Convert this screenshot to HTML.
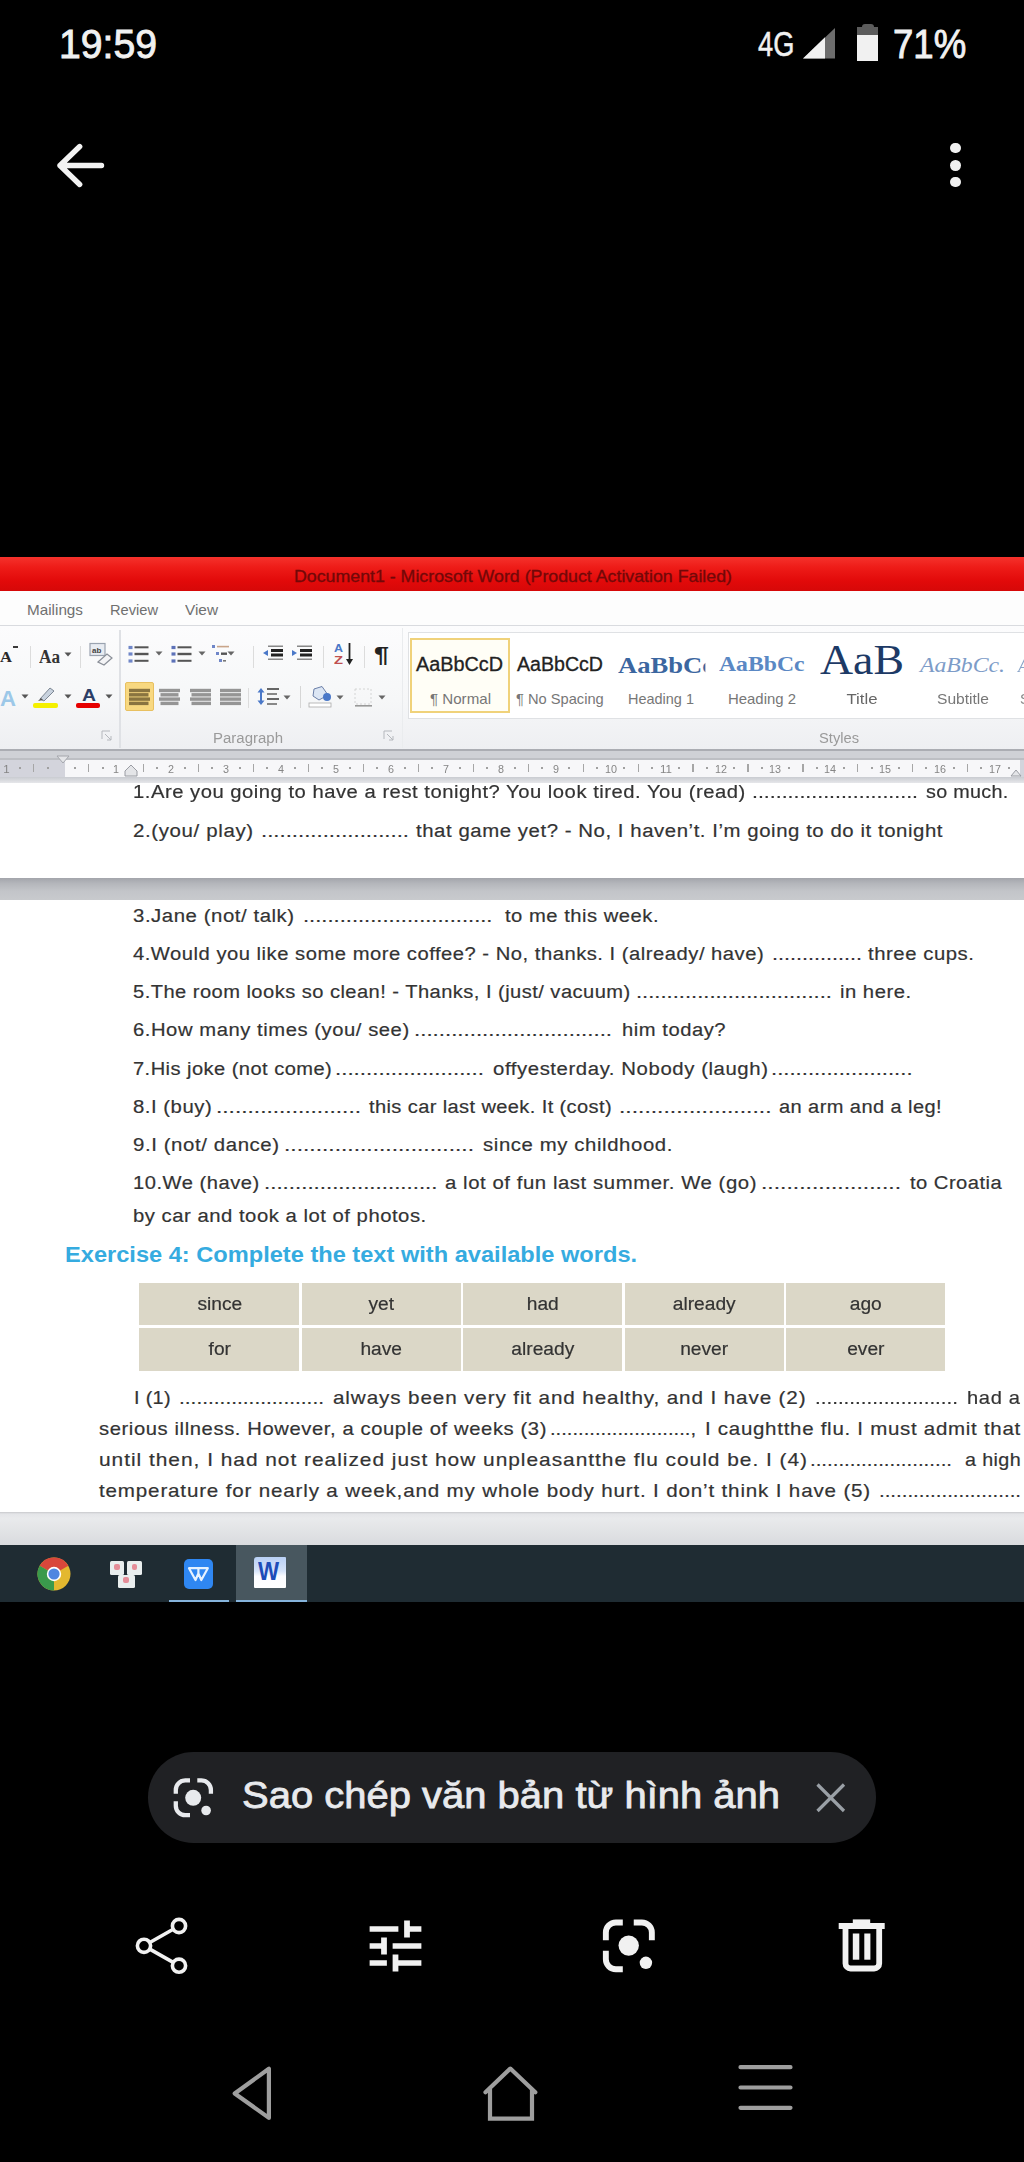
<!DOCTYPE html><html><head><meta charset="utf-8"><title>screen</title><style>*{margin:0;padding:0;box-sizing:border-box}
html,body{width:1024px;height:2162px;background:#000;overflow:hidden;font-family:"Liberation Sans",sans-serif}
.a{position:absolute;white-space:nowrap;line-height:1}
svg.a{overflow:visible}</style></head><body>
<div class="a" style="left:58.6px;transform-origin:left;top:23.9px;font-size:41px;color:#f1f1f1;font-weight:normal;font-family:'Liberation Sans', sans-serif;font-style:normal;transform:scaleX(0.9551);-webkit-text-stroke:0.9px #f1f1f1;"><span id="t0">19:59</span></div>
<div class="a" style="left:757.7px;transform-origin:left;top:26.5px;font-size:34.5px;color:#f1f1f1;font-weight:normal;font-family:'Liberation Sans', sans-serif;font-style:normal;transform:scaleX(0.7886);-webkit-text-stroke:0.5px #f1f1f1;"><span id="t1">4G</span></div>
<div class="a" style="left:892.5px;transform-origin:left;top:23.9px;font-size:41px;color:#f1f1f1;font-weight:normal;font-family:'Liberation Sans', sans-serif;font-style:normal;transform:scaleX(0.8920);-webkit-text-stroke:0.9px #f1f1f1;"><span id="t2">71%</span></div>
<svg class="a" style="left:800px;top:25px" width="40" height="40" viewBox="800 25 40 40"><polygon points="803,58.6 835,58.6 835,28" fill="#6d6d6d"/><polygon points="803,58.6 825,58.6 825,37.2" fill="#f1f1f1"/></svg>
<div class="a" style="left:861.5px;top:23.5px;width:12.5px;height:5px;background:#5c5c5c;border-radius:3px 3px 0 0"></div>
<div class="a" style="left:857px;top:27px;width:21px;height:8px;background:#5c5c5c"></div>
<div class="a" style="left:857px;top:35px;width:21px;height:26px;background:#f1f1f1"></div>
<svg class="a" style="left:45px;top:130px" width="70" height="70" viewBox="45 130 70 70" fill="none" stroke="#f3f3f3" stroke-width="5.4" stroke-linecap="round" stroke-linejoin="round"><path d="M79.7 146.5 L60 165.5 L79.7 184.5 M60 165.5 H101.5"/></svg>
<div class="a" style="left:950.1px;top:142.6px;width:10.8px;height:10.8px;border-radius:50%;background:#f1f1f1"></div>
<div class="a" style="left:950.1px;top:160.1px;width:10.8px;height:10.8px;border-radius:50%;background:#f1f1f1"></div>
<div class="a" style="left:950.1px;top:176.6px;width:10.8px;height:10.8px;border-radius:50%;background:#f1f1f1"></div>
<div class="a" style="left:148px;top:1752px;width:727.5px;height:91px;border-radius:45.5px;background:#202124"></div>
<svg class="a" style="left:165px;top:1770px" width="56" height="56" viewBox="165 1770 56 56" fill="none" stroke="#e8eaed" stroke-width="4.3"><path d="M175.8 1793.7 V1789.9 A9.5 9.5 0 0 1 185.3 1780.4 H190"/><path d="M197.3 1780.4 H201.4 A9.5 9.5 0 0 1 210.9 1789.9 V1793.7"/><path d="M175.8 1801.2 V1805.7 A9.5 9.5 0 0 0 185.3 1815.2 H190"/><circle cx="193.2" cy="1797.8" r="8" fill="#e8eaed" stroke="none"/><circle cx="206.1" cy="1810.5" r="4.8" fill="#e8eaed" stroke="none"/></svg>
<div class="a" style="left:242.0px;transform-origin:left;top:1777.3px;font-size:37px;color:#e8eaed;font-weight:normal;font-family:'Liberation Sans', sans-serif;font-style:normal;transform:scaleX(1.0805);-webkit-text-stroke:0.8px #e8eaed;"><span id="t3">Sao chép văn bản từ hình ảnh</span></div>
<svg class="a" style="left:812px;top:1779px" width="38" height="38" viewBox="812 1779 38 38" stroke="#9aa0a6" stroke-width="3.2"><path d="M817.5 1784.5 L844 1811 M844 1784.5 L817.5 1811"/></svg>
<svg class="a" style="left:125px;top:1905px" width="80" height="80" viewBox="125 1905 80 80" fill="none" stroke="#f1f1f1" stroke-width="3.6"><circle cx="144" cy="1945.8" r="6.6"/><circle cx="179" cy="1926" r="6.6"/><circle cx="179" cy="1965.7" r="6.6"/><path d="M149.8 1942.5 L173.2 1929.3 M149.8 1949.1 L173.2 1962.4"/></svg>
<svg class="a" style="left:361px;top:1912px" width="69" height="68" viewBox="0 0 24 24" preserveAspectRatio="none"><path fill="#f1f1f1" d="M3 17v2h6v-2H3zM3 5v2h10V5H3zm10 16v-2h8v-2h-8v-2h-2v6h2zM7 9v2H3v2h4v2h2V9H7zm14 4v-2H11v2h10zm-6-4h2V7h4V5h-4V3h-2v6z"/></svg>
<svg class="a" style="left:596px;top:1914px" width="66" height="64" viewBox="596 1914 66 64" fill="none" stroke="#f1f1f1" stroke-width="5.9"><path d="M605.85 1940.2 V1932.45 A10 10 0 0 1 615.85 1922.45 H622.8"/><path d="M633.75 1922.45 H641.85 A10 10 0 0 1 651.85 1932.45 V1940.2"/><path d="M605.85 1950.7 V1959.25 A10 10 0 0 0 615.85 1969.25 H622.8"/><circle cx="628.7" cy="1945.6" r="10.2" fill="#f1f1f1" stroke="none"/><circle cx="645.9" cy="1962.8" r="6.2" fill="#f1f1f1" stroke="none"/></svg>
<svg class="a" style="left:834px;top:1914px" width="56" height="62" viewBox="834 1914 56 62" fill="none" stroke="#f1f1f1" stroke-width="5.8"><rect x="852.8" y="1919.4" width="17.4" height="5" fill="#f1f1f1" stroke="none"/><rect x="838.7" y="1923" width="46" height="6" fill="#f1f1f1" stroke="none"/><path d="M845.5 1928 V1963.5 a5 5 0 0 0 5 5 H874.2 a5 5 0 0 0 5 -5 V1928"/><rect x="852.8" y="1933.5" width="6.5" height="26.2" fill="#f1f1f1" stroke="none"/><rect x="864.3" y="1933.5" width="6.1" height="26.2" fill="#f1f1f1" stroke="none"/></svg>
<svg class="a" style="left:220px;top:2055px" width="600" height="80" viewBox="220 2055 600 80" fill="none" stroke="#9e9e9e" stroke-width="4.2" stroke-linejoin="round" stroke-linecap="round"><path d="M268.9 2068.7 V2117.9 L234.7 2093.5 Z"/><path d="M485.5 2092.3 L510.3 2068.6 L535.3 2092.3"/><path d="M490 2089 V2118.6 H532 V2089" stroke-linecap="butt" stroke-linejoin="miter"/><path d="M740.5 2067.2 H790.5 M740.5 2087.5 H790.5 M740.5 2107.8 H790.5"/></svg>
<div style="position:absolute;left:0;top:0;width:1024px;height:2162px;filter:blur(0.35px)">
<div class="a" style="left:0;top:557px;width:1024px;height:34px;background:linear-gradient(#f5322c 0%,#ee1c18 30%,#e20a0a 70%,#d60808 100%)"></div>
<div class="a" style="left:294.0px;transform-origin:left;top:567.5px;font-size:16.5px;color:#720808;font-weight:normal;font-family:'Liberation Sans', sans-serif;font-style:normal;transform:scaleX(1.0765);-webkit-text-stroke:0.3px #720808;"><span id="t4">Document1  -  Microsoft Word (Product Activation Failed)</span></div>
<div class="a" style="left:0;top:591px;width:1024px;height:35px;background:#fdfdfd;border-bottom:1.5px solid #d9dbdf"></div>
<div class="a" style="left:27.0px;transform-origin:left;top:602.7px;font-size:14.5px;color:#707070;font-weight:normal;font-family:'Liberation Sans', sans-serif;font-style:normal;transform:scaleX(1.0529);"><span id="t5">Mailings</span></div>
<div class="a" style="left:110.0px;transform-origin:left;top:602.7px;font-size:14.5px;color:#707070;font-weight:normal;font-family:'Liberation Sans', sans-serif;font-style:normal;transform:scaleX(1.0095);"><span id="t6">Review</span></div>
<div class="a" style="left:185.0px;transform-origin:left;top:602.7px;font-size:14.5px;color:#707070;font-weight:normal;font-family:'Liberation Sans', sans-serif;font-style:normal;transform:scaleX(1.0586);"><span id="t7">View</span></div>
<div class="a" style="left:0;top:626px;width:1024px;height:123px;background:linear-gradient(#fcfcfd,#f6f7f8 60%,#eeeff2)"></div>
<div class="a" style="left:119px;top:630px;width:1.5px;height:118px;background:#dfe1e5"></div>
<div class="a" style="left:0;top:749px;width:1024px;height:11px;background:linear-gradient(#abadb3 0,#abadb3 2px,#cfd1d6 2px,#cfd1d6 9px,#bdbfc4 9px)"></div>
<div class="a" style="left:0;top:760px;width:1024px;height:17px;background:#d3d4dc"></div>
<div class="a" style="left:64.5px;top:760px;width:955.5px;height:17px;background:#f7f7f9"></div>
<div class="a" style="left:0;top:777px;width:1024px;height:6px;background:linear-gradient(#c9ccd1,#e6e7ea)"></div>
<div class="a" style="left:0;top:783px;width:1024px;height:95px;background:#fff"></div>
<div class="a" style="left:0;top:878px;width:1024px;height:22px;background:linear-gradient(#a3a5ab 0%,#b4b6bb 25%,#c3c5c9 60%,#c8cacd 100%)"></div>
<div class="a" style="left:0;top:900px;width:1024px;height:612px;background:#fff"></div>
<div class="a" style="left:0;top:1512px;width:1024px;height:33px;background:linear-gradient(#c8c9cc 0,#e4e5e8 2px,#e9eaec 20%,#d9dbde 100%)"></div>
<div class="a" style="left:0;top:1545px;width:1024px;height:57px;background:#1f2c33"></div>
<div class="a" style="left:236px;top:1545px;width:71px;height:57px;background:#48575f"></div>
<div class="a" style="left:169px;top:1599.5px;width:60px;height:2.5px;background:#86b4dc"></div>
<div class="a" style="left:236px;top:1599.5px;width:71px;height:2.5px;background:#86b4dc"></div>
<svg class="a" style="left:36px;top:1556px" width="36" height="36" viewBox="-18 -18 36 36"><circle r="16.5" fill="#e3b82f"/><path d="M0 0 L-14.3 -8.25 A16.5 16.5 0 0 1 14.3 -8.25 Z" fill="#d9473b"/><path d="M0 0 L-14.3 -8.25 A16.5 16.5 0 0 0 0 16.5 Z" fill="#3a9a4c"/><circle r="7.2" fill="#fff"/><circle r="5.6" fill="#4f86e0"/></svg>
<div class="a" style="left:109.5px;top:1560.8px;width:14.7px;height:14px;background:#e9eeee;border-radius:1.5px"></div>
<div class="a" style="left:127.1px;top:1560.8px;width:14.6px;height:14px;background:#e9eeee;border-radius:1.5px"></div>
<div class="a" style="left:118.3px;top:1575px;width:16.4px;height:12.6px;background:#e9eeee;border-radius:1.5px"></div>
<div class="a" style="left:114px;top:1564px;width:6px;height:6px;background:#e58d98;border-radius:2px"></div>
<div class="a" style="left:131.5px;top:1564px;width:5px;height:6px;background:#e58d98;border-radius:2px"></div>
<div class="a" style="left:123px;top:1576.5px;width:6px;height:6px;background:#e58d98;border-radius:2px"></div>
<div class="a" style="left:184.3px;top:1558.8px;width:28.8px;height:30.2px;background:#2f87f2;border-radius:5px"></div>
<svg class="a" style="left:175px;top:1550px" width="50" height="45" viewBox="175 1550 50 45" fill="none" stroke="#e6f2ff" stroke-width="2.2" stroke-linejoin="round"><path d="M189 1568.2 H207.8 L201.3 1580 L198.4 1573.5 L195.5 1580 Z M198.4 1568.2 V1573.5"/></svg>
<div class="a" style="left:254px;top:1557px;width:32.3px;height:30.5px;background:linear-gradient(#b9d0f5 0%,#d6e4fa 45%,#fbfcff 62%,#ffffff 100%);border-radius:3px 1px 1px 1px"></div>
<div class="a" style="left:257.6px;transform-origin:left;top:1558.8px;font-size:25px;color:#1d4db8;font-weight:bold;font-family:'Liberation Sans', sans-serif;font-style:normal;transform:scaleX(0.8937);"><span id="t8">W</span></div>
<div class="a" style="left:0.0px;transform-origin:left;top:650.4px;font-size:15px;color:#2a2a2a;font-weight:bold;font-family:'Liberation Serif', serif;font-style:normal;transform:scaleX(1.1066);"><span id="t9">A</span></div>
<div class="a" style="left:13px;top:645.5px;width:5px;height:2px;background:#3a3a3a"></div>
<div class="a" style="left:30px;top:646px;width:1px;height:22px;background:#dcdcdc"></div>
<div class="a" style="left:39.0px;transform-origin:left;top:647.9px;font-size:18px;color:#333;font-weight:bold;font-family:'Liberation Serif', serif;font-style:normal;transform:scaleX(0.9545);"><span id="t10">Aa</span></div>
<svg class="a" style="left:64px;top:652px" width="8" height="5" viewBox="0 0 8 5"><path d="M0.5 0.5 H7.5 L4 4.5Z" fill="#555"/></svg>
<div class="a" style="left:80px;top:646px;width:1px;height:22px;background:#dcdcdc"></div>
<svg class="a" style="left:88px;top:642px" width="26" height="25" viewBox="0 0 26 25"><rect x="2" y="1.5" width="15" height="12" fill="#e8ecf2" stroke="#9aa3b0" stroke-width="1.2"/><text x="4" y="11" font-size="8" font-family="Liberation Sans" font-weight="bold" fill="#444">ab</text><path d="M10 20 L19 12 L24 16 L16 23 Z" fill="#f4f4f6" stroke="#8a8f98" stroke-width="1.2"/></svg>
<div class="a" style="left:0.0px;transform-origin:left;top:688.4px;font-size:22px;color:#9cc8e8;font-weight:bold;font-family:'Liberation Sans', sans-serif;font-style:normal;transform:scaleX(1.0069);"><span id="t11">A</span></div>
<svg class="a" style="left:21px;top:694px" width="8" height="5" viewBox="0 0 8 5"><path d="M0.5 0.5 H7.5 L4 4.5Z" fill="#555"/></svg>
<svg class="a" style="left:36px;top:685px" width="20" height="17" viewBox="0 0 20 17"><path d="M4 14 L14 3 L18 6 L8 16 Z" fill="#c8d2de" stroke="#7d8794" stroke-width="1"/><path d="M2 16 L5 13 L7 15Z" fill="#555"/></svg>
<div class="a" style="left:33px;top:703px;width:25px;height:5px;background:#f5f000;border-radius:2px"></div>
<svg class="a" style="left:64px;top:694px" width="8" height="5" viewBox="0 0 8 5"><path d="M0.5 0.5 H7.5 L4 4.5Z" fill="#555"/></svg>
<div class="a" style="left:82.0px;transform-origin:left;top:687.5px;font-size:16px;color:#2c3e66;font-weight:bold;font-family:'Liberation Sans', sans-serif;font-style:normal;transform:scaleX(1.2108);"><span id="t12">A</span></div>
<div class="a" style="left:76px;top:703px;width:24px;height:5px;background:#e60000;border-radius:2px"></div>
<svg class="a" style="left:105px;top:694px" width="8" height="5" viewBox="0 0 8 5"><path d="M0.5 0.5 H7.5 L4 4.5Z" fill="#555"/></svg>
<svg class="a" style="left:101px;top:730px" width="12" height="11" viewBox="0 0 12 11" fill="none" stroke="#b5b8bd" stroke-width="1"><path d="M1 9 V1 H9"/><path d="M4 4 L10 10 M10 6 V10 H6"/></svg>
<svg class="a" style="left:128px;top:644.5px" width="24" height="20" viewBox="0 0 24 20"><rect x="0.5" y="0.8999999999999999" width="4" height="3.2" fill="#6f86c8"/><rect x="6.5" y="1.3" width="14" height="2" fill="#555"/><rect x="0.5" y="7.4" width="4" height="3.2" fill="#6f86c8"/><rect x="6.5" y="7.8" width="14" height="2.4" fill="#555"/><rect x="0.5" y="14.4" width="4" height="3.2" fill="#6f86c8"/><rect x="6.5" y="14.8" width="14" height="2" fill="#555"/></svg>
<svg class="a" style="left:155px;top:650.5px" width="8" height="5" viewBox="0 0 8 5"><path d="M0.5 0.5 H7.5 L4 4.5Z" fill="#666"/></svg>
<svg class="a" style="left:171px;top:644.5px" width="24" height="20" viewBox="0 0 24 20"><rect x="0.5" y="0.8999999999999999" width="4" height="3.2" fill="#5d72b8"/><rect x="6.5" y="1.3" width="14" height="2" fill="#555"/><rect x="0.5" y="7.4" width="4" height="3.2" fill="#5d72b8"/><rect x="6.5" y="7.8" width="14" height="2.4" fill="#555"/><rect x="0.5" y="14.4" width="4" height="3.2" fill="#5d72b8"/><rect x="6.5" y="14.8" width="14" height="2" fill="#555"/></svg>
<svg class="a" style="left:198px;top:650.5px" width="8" height="5" viewBox="0 0 8 5"><path d="M0.5 0.5 H7.5 L4 4.5Z" fill="#666"/></svg>
<svg class="a" style="left:211px;top:643px" width="24" height="22" viewBox="0 0 24 22"><rect x="1" y="2" width="3" height="3" fill="#6f86c8"/><rect x="6" y="2.8" width="12" height="1.6" fill="#c9a58a"/><rect x="5" y="9" width="3" height="3" fill="#6f86c8"/><rect x="10" y="9.5" width="6" height="2.4" fill="#555"/><rect x="8" y="16" width="3" height="3" fill="#6f86c8"/><rect x="12" y="17" width="3" height="1.6" fill="#777"/></svg>
<svg class="a" style="left:227px;top:650.5px" width="8" height="5" viewBox="0 0 8 5"><path d="M0.5 0.5 H7.5 L4 4.5Z" fill="#666"/></svg>
<div class="a" style="left:253px;top:646px;width:1px;height:22px;background:#dcdcdc"></div>
<svg class="a" style="left:262px;top:645px" width="23" height="18" viewBox="0 0 23 18"><rect x="6" y="0.5" width="15" height="1.5" fill="#888"/><rect x="9" y="4" width="12" height="3" fill="#222"/><rect x="9" y="8.5" width="12" height="3" fill="#222"/><rect x="6" y="13.5" width="15" height="1.5" fill="#888"/><path d="M1 8 L6 5 V11Z" fill="#4a78c8"/></svg>
<svg class="a" style="left:291px;top:645px" width="23" height="18" viewBox="0 0 23 18"><rect x="6" y="0.5" width="15" height="1.5" fill="#888"/><rect x="9" y="4" width="12" height="3" fill="#222"/><rect x="9" y="8.5" width="12" height="3" fill="#222"/><rect x="6" y="13.5" width="15" height="1.5" fill="#888"/><path d="M6 8 L1 5 V11Z" fill="#4a78c8"/></svg>
<div class="a" style="left:323px;top:646px;width:1px;height:22px;background:#dcdcdc"></div>
<div class="a" style="left:334.0px;transform-origin:left;top:643.5px;font-size:10px;color:#4a78c8;font-weight:bold;font-family:'Liberation Sans', sans-serif;font-style:normal;transform:scaleX(1.2441);"><span id="t13">A</span></div>
<div class="a" style="left:334.0px;transform-origin:left;top:655.5px;font-size:10px;color:#c05050;font-weight:bold;font-family:'Liberation Sans', sans-serif;font-style:normal;transform:scaleX(1.4731);"><span id="t14">Z</span></div>
<svg class="a" style="left:345px;top:642px" width="9" height="24" viewBox="0 0 9 24"><path d="M4.5 1 V20" stroke="#222" stroke-width="1.8"/><path d="M1 17 L4.5 23 L8 17Z" fill="#222"/></svg>
<div class="a" style="left:364px;top:646px;width:1px;height:22px;background:#dcdcdc"></div>
<div class="a" style="left:374.0px;transform-origin:left;top:644.4px;font-size:22px;color:#222;font-weight:bold;font-family:'Liberation Sans', sans-serif;font-style:normal;transform:scaleX(1.2245);"><span id="t15">¶</span></div>
<div class="a" style="left:124.5px;top:682px;width:29.5px;height:28.5px;background:#f8d880;border:1px solid #e8c060;border-radius:2px"></div>
<svg class="a" style="left:128.5px;top:688px" width="21" height="17" viewBox="0 0 21 17"><rect x="0" y="0.8" width="21" height="3.4" fill="#8a7440"/><rect x="0" y="5.1" width="19.5" height="3.4" fill="#8a7440"/><rect x="0" y="9.4" width="21" height="3.4" fill="#8a7440"/><rect x="0" y="13.7" width="19.5" height="3.4" fill="#8a7440"/></svg>
<svg class="a" style="left:158.5px;top:688px" width="21" height="17" viewBox="0 0 21 17"><rect x="0.0" y="0.8" width="21" height="3.4" fill="#959595"/><rect x="1.5" y="5.1" width="18" height="3.4" fill="#959595"/><rect x="0.0" y="9.4" width="21" height="3.4" fill="#959595"/><rect x="1.5" y="13.7" width="18" height="3.4" fill="#959595"/></svg>
<svg class="a" style="left:189.5px;top:688px" width="21" height="17" viewBox="0 0 21 17"><rect x="0" y="0.8" width="21" height="3.4" fill="#959595"/><rect x="1.5" y="5.1" width="19.5" height="3.4" fill="#959595"/><rect x="0" y="9.4" width="21" height="3.4" fill="#959595"/><rect x="1.5" y="13.7" width="19.5" height="3.4" fill="#959595"/></svg>
<svg class="a" style="left:219.5px;top:688px" width="21" height="17" viewBox="0 0 21 17"><rect x="0" y="0.8" width="21" height="3.4" fill="#959595"/><rect x="0" y="5.1" width="21" height="3.4" fill="#959595"/><rect x="0" y="9.4" width="21" height="3.4" fill="#959595"/><rect x="0" y="13.7" width="21" height="3.4" fill="#959595"/></svg>
<div class="a" style="left:248px;top:688px;width:1px;height:20px;background:#dcdcdc"></div>
<svg class="a" style="left:257px;top:687px" width="24" height="19" viewBox="0 0 24 19"><path d="M4 1 L7.5 5.5 H0.5Z M4 18 L7.5 13.5 H0.5Z" fill="#4a78c8"/><rect x="3" y="5" width="2" height="9" fill="#4a78c8"/><rect x="10" y="1" width="12" height="2" fill="#666"/><rect x="10" y="6" width="10" height="2" fill="#888"/><rect x="10" y="11" width="12" height="2" fill="#666"/><rect x="10" y="16" width="10" height="2" fill="#888"/></svg>
<svg class="a" style="left:283px;top:694.5px" width="8" height="5" viewBox="0 0 8 5"><path d="M0.5 0.5 H7.5 L4 4.5Z" fill="#666"/></svg>
<div class="a" style="left:300px;top:686px;width:1px;height:22px;background:#d6d6d6"></div>
<svg class="a" style="left:307px;top:686px" width="28" height="22" viewBox="0 0 28 22"><path d="M7 3 L15 0.5 L21 9 L12 14 L6 10Z" fill="#dce6f4" stroke="#6b7fa8" stroke-width="1"/><circle cx="20" cy="11" r="4" fill="#4a78c8"/><rect x="2" y="17" width="22" height="4" fill="#fff" stroke="#aaa" stroke-width="0.8"/></svg>
<svg class="a" style="left:336px;top:694.5px" width="8" height="5" viewBox="0 0 8 5"><path d="M0.5 0.5 H7.5 L4 4.5Z" fill="#666"/></svg>
<svg class="a" style="left:354px;top:688px" width="20" height="20" viewBox="0 0 20 20"><rect x="1" y="1" width="16" height="15" fill="none" stroke="#ccc" stroke-width="0.8" stroke-dasharray="2 2"/><rect x="1" y="17" width="17" height="1.6" fill="#999"/></svg>
<svg class="a" style="left:378px;top:694.5px" width="8" height="5" viewBox="0 0 8 5"><path d="M0.5 0.5 H7.5 L4 4.5Z" fill="#666"/></svg>
<div class="a" style="left:-252.0px;width:1000px;text-align:center;transform-origin:center;top:731.1px;font-size:14px;color:#9a9a9a;font-weight:normal;font-family:'Liberation Sans', sans-serif;font-style:normal;transform:scaleX(1.0705);"><span id="t16">Paragraph</span></div>
<svg class="a" style="left:383px;top:730px" width="12" height="11" viewBox="0 0 12 11" fill="none" stroke="#b5b8bd" stroke-width="1"><path d="M1 9 V1 H9"/><path d="M4 4 L10 10 M10 6 V10 H6"/></svg>
<div class="a" style="left:401.5px;top:628px;width:1px;height:120px;background:#eaecee"></div>
<div class="a" style="left:408px;top:632px;width:620px;height:87px;background:#fff;border:1px solid #dfe1e4;border-right:none"></div>
<div class="a" style="left:410px;top:638px;width:100px;height:75px;background:#fffef6;border:2px solid #f0d27a"></div>
<div class="a" style="left:415.6px;transform-origin:left;top:654.5px;font-size:19.5px;color:#222;font-weight:normal;font-family:'Liberation Sans', sans-serif;font-style:normal;transform:scaleX(1.0161);-webkit-text-stroke:0.3px #222;"><span id="t17">AaBbCcD</span></div>
<div class="a" style="left:517.0px;transform-origin:left;top:654.5px;font-size:19.5px;color:#222;font-weight:normal;font-family:'Liberation Sans', sans-serif;font-style:normal;transform:scaleX(1.0044);-webkit-text-stroke:0.3px #222;"><span id="t18">AaBbCcD</span></div>
<div class="a" style="left:618.0px;transform-origin:left;top:654.4px;font-size:23px;color:#3b66a0;font-weight:bold;font-family:'Liberation Serif', serif;font-style:normal;transform:scaleX(1.1558);clip-path:inset(-10px 9% -10px -10px);"><span id="t19">AaBbCc</span></div>
<div class="a" style="left:719.0px;transform-origin:left;top:654.4px;font-size:21px;color:#5a88c4;font-weight:bold;font-family:'Liberation Serif', serif;font-style:normal;transform:scaleX(1.1273);"><span id="t20">AaBbCc</span></div>
<div class="a" style="left:820.0px;transform-origin:left;top:638.6px;font-size:42px;color:#1d3a66;font-weight:normal;font-family:'Liberation Serif', serif;font-style:normal;transform:scaleX(1.0909);"><span id="t21">AaB</span></div>
<div class="a" style="left:920.0px;transform-origin:left;top:655.2px;font-size:20px;color:#7d9cc8;font-weight:normal;font-family:'Liberation Serif', serif;font-style:italic;transform:scaleX(1.1862);"><span id="t22">AaBbCc.</span></div>
<div class="a" style="left:429.7px;transform-origin:left;top:691.7px;font-size:14.5px;color:#777;font-weight:normal;font-family:'Liberation Sans', sans-serif;font-style:normal;transform:scaleX(1.0419);"><span id="t23">¶ Normal</span></div>
<div class="a" style="left:516.0px;transform-origin:left;top:691.7px;font-size:14.5px;color:#777;font-weight:normal;font-family:'Liberation Sans', sans-serif;font-style:normal;transform:scaleX(1.0106);"><span id="t24">¶ No Spacing</span></div>
<div class="a" style="left:627.5px;transform-origin:left;top:691.7px;font-size:14.5px;color:#777;font-weight:normal;font-family:'Liberation Sans', sans-serif;font-style:normal;transform:scaleX(0.9983);"><span id="t25">Heading 1</span></div>
<div class="a" style="left:728.0px;transform-origin:left;top:691.7px;font-size:14.5px;color:#777;font-weight:normal;font-family:'Liberation Sans', sans-serif;font-style:normal;transform:scaleX(1.0286);"><span id="t26">Heading 2</span></div>
<div class="a" style="left:362.0px;width:1000px;text-align:center;transform-origin:center;top:691.7px;font-size:14.5px;color:#666;font-weight:normal;font-family:'Liberation Sans', sans-serif;font-style:normal;transform:scaleX(1.1542);"><span id="t27">Title</span></div>
<div class="a" style="left:937.0px;transform-origin:left;top:691.7px;font-size:14.5px;color:#777;font-weight:normal;font-family:'Liberation Sans', sans-serif;font-style:normal;transform:scaleX(1.0749);"><span id="t28">Subtitle</span></div>
<div class="a" style="left:339.0px;width:1000px;text-align:center;transform-origin:center;top:731.1px;font-size:14px;color:#9a9a9a;font-weight:normal;font-family:'Liberation Sans', sans-serif;font-style:normal;transform:scaleX(1.0492);"><span id="t29">Styles</span></div>
<div class="a" style="left:1018.0px;transform-origin:left;top:656.9px;font-size:18px;color:#8aa4c8;font-weight:normal;font-family:'Liberation Serif', serif;font-style:italic;"><span id="t30">A</span></div>
<div class="a" style="left:1020.0px;transform-origin:left;top:691.7px;font-size:14.5px;color:#888;font-weight:normal;font-family:'Liberation Sans', sans-serif;font-style:normal;"><span id="t31">S</span></div>
<div class="a" style="left:-493.6px;width:1000px;text-align:center;transform-origin:center;top:764.3px;font-size:11.5px;color:#858585;font-weight:normal;font-family:'Liberation Sans', sans-serif;font-style:normal;"><span id="t32">1</span></div>
<div class="a" style="left:-383.8px;width:1000px;text-align:center;transform-origin:center;top:764.3px;font-size:11.5px;color:#858585;font-weight:normal;font-family:'Liberation Sans', sans-serif;font-style:normal;transform:scaleX(0.9366);"><span id="t33">1</span></div>
<div class="a" style="left:-328.8px;width:1000px;text-align:center;transform-origin:center;top:764.3px;font-size:11.5px;color:#858585;font-weight:normal;font-family:'Liberation Sans', sans-serif;font-style:normal;transform:scaleX(0.9366);"><span id="t34">2</span></div>
<div class="a" style="left:-273.9px;width:1000px;text-align:center;transform-origin:center;top:764.3px;font-size:11.5px;color:#858585;font-weight:normal;font-family:'Liberation Sans', sans-serif;font-style:normal;transform:scaleX(0.9366);"><span id="t35">3</span></div>
<div class="a" style="left:-219.0px;width:1000px;text-align:center;transform-origin:center;top:764.3px;font-size:11.5px;color:#858585;font-weight:normal;font-family:'Liberation Sans', sans-serif;font-style:normal;transform:scaleX(0.9366);"><span id="t36">4</span></div>
<div class="a" style="left:-164.1px;width:1000px;text-align:center;transform-origin:center;top:764.3px;font-size:11.5px;color:#858585;font-weight:normal;font-family:'Liberation Sans', sans-serif;font-style:normal;transform:scaleX(0.9366);"><span id="t37">5</span></div>
<div class="a" style="left:-109.1px;width:1000px;text-align:center;transform-origin:center;top:764.3px;font-size:11.5px;color:#858585;font-weight:normal;font-family:'Liberation Sans', sans-serif;font-style:normal;transform:scaleX(0.9366);"><span id="t38">6</span></div>
<div class="a" style="left:-54.2px;width:1000px;text-align:center;transform-origin:center;top:764.3px;font-size:11.5px;color:#858585;font-weight:normal;font-family:'Liberation Sans', sans-serif;font-style:normal;transform:scaleX(0.9366);"><span id="t39">7</span></div>
<div class="a" style="left:0.7px;width:1000px;text-align:center;transform-origin:center;top:764.3px;font-size:11.5px;color:#858585;font-weight:normal;font-family:'Liberation Sans', sans-serif;font-style:normal;transform:scaleX(0.9366);"><span id="t40">8</span></div>
<div class="a" style="left:55.7px;width:1000px;text-align:center;transform-origin:center;top:764.3px;font-size:11.5px;color:#858585;font-weight:normal;font-family:'Liberation Sans', sans-serif;font-style:normal;transform:scaleX(0.9366);"><span id="t41">9</span></div>
<div class="a" style="left:110.6px;width:1000px;text-align:center;transform-origin:center;top:764.3px;font-size:11.5px;color:#858585;font-weight:normal;font-family:'Liberation Sans', sans-serif;font-style:normal;transform:scaleX(0.9377);"><span id="t42">10</span></div>
<div class="a" style="left:165.5px;width:1000px;text-align:center;transform-origin:center;top:764.3px;font-size:11.5px;color:#858585;font-weight:normal;font-family:'Liberation Sans', sans-serif;font-style:normal;transform:scaleX(1.0039);"><span id="t43">11</span></div>
<div class="a" style="left:220.5px;width:1000px;text-align:center;transform-origin:center;top:764.3px;font-size:11.5px;color:#858585;font-weight:normal;font-family:'Liberation Sans', sans-serif;font-style:normal;transform:scaleX(0.9377);"><span id="t44">12</span></div>
<div class="a" style="left:275.4px;width:1000px;text-align:center;transform-origin:center;top:764.3px;font-size:11.5px;color:#858585;font-weight:normal;font-family:'Liberation Sans', sans-serif;font-style:normal;transform:scaleX(0.9377);"><span id="t45">13</span></div>
<div class="a" style="left:330.3px;width:1000px;text-align:center;transform-origin:center;top:764.3px;font-size:11.5px;color:#858585;font-weight:normal;font-family:'Liberation Sans', sans-serif;font-style:normal;transform:scaleX(0.9377);"><span id="t46">14</span></div>
<div class="a" style="left:385.2px;width:1000px;text-align:center;transform-origin:center;top:764.3px;font-size:11.5px;color:#858585;font-weight:normal;font-family:'Liberation Sans', sans-serif;font-style:normal;transform:scaleX(0.9377);"><span id="t47">15</span></div>
<div class="a" style="left:440.2px;width:1000px;text-align:center;transform-origin:center;top:764.3px;font-size:11.5px;color:#858585;font-weight:normal;font-family:'Liberation Sans', sans-serif;font-style:normal;transform:scaleX(0.9377);"><span id="t48">16</span></div>
<div class="a" style="left:495.1px;width:1000px;text-align:center;transform-origin:center;top:764.3px;font-size:11.5px;color:#858585;font-weight:normal;font-family:'Liberation Sans', sans-serif;font-style:normal;transform:scaleX(0.9377);"><span id="t49">17</span></div>
<div class="a" style="left:19.1px;top:767px;width:2px;height:2px;background:#a0a0a0"></div>
<div class="a" style="left:33.2px;top:764px;width:1.3px;height:8px;background:#a6a6a6"></div>
<div class="a" style="left:46.6px;top:767px;width:2px;height:2px;background:#a0a0a0"></div>
<div class="a" style="left:74.0px;top:767px;width:2px;height:2px;background:#a0a0a0"></div>
<div class="a" style="left:88.2px;top:764px;width:1.3px;height:8px;background:#a6a6a6"></div>
<div class="a" style="left:101.5px;top:767px;width:2px;height:2px;background:#a0a0a0"></div>
<div class="a" style="left:129.0px;top:767px;width:2px;height:2px;background:#a0a0a0"></div>
<div class="a" style="left:143.1px;top:764px;width:1.3px;height:8px;background:#a6a6a6"></div>
<div class="a" style="left:156.4px;top:767px;width:2px;height:2px;background:#a0a0a0"></div>
<div class="a" style="left:183.9px;top:767px;width:2px;height:2px;background:#a0a0a0"></div>
<div class="a" style="left:198.0px;top:764px;width:1.3px;height:8px;background:#a6a6a6"></div>
<div class="a" style="left:211.4px;top:767px;width:2px;height:2px;background:#a0a0a0"></div>
<div class="a" style="left:238.8px;top:767px;width:2px;height:2px;background:#a0a0a0"></div>
<div class="a" style="left:253.0px;top:764px;width:1.3px;height:8px;background:#a6a6a6"></div>
<div class="a" style="left:266.3px;top:767px;width:2px;height:2px;background:#a0a0a0"></div>
<div class="a" style="left:293.8px;top:767px;width:2px;height:2px;background:#a0a0a0"></div>
<div class="a" style="left:307.9px;top:764px;width:1.3px;height:8px;background:#a6a6a6"></div>
<div class="a" style="left:321.2px;top:767px;width:2px;height:2px;background:#a0a0a0"></div>
<div class="a" style="left:348.7px;top:767px;width:2px;height:2px;background:#a0a0a0"></div>
<div class="a" style="left:362.8px;top:764px;width:1.3px;height:8px;background:#a6a6a6"></div>
<div class="a" style="left:376.1px;top:767px;width:2px;height:2px;background:#a0a0a0"></div>
<div class="a" style="left:403.6px;top:767px;width:2px;height:2px;background:#a0a0a0"></div>
<div class="a" style="left:417.7px;top:764px;width:1.3px;height:8px;background:#a6a6a6"></div>
<div class="a" style="left:431.1px;top:767px;width:2px;height:2px;background:#a0a0a0"></div>
<div class="a" style="left:458.5px;top:767px;width:2px;height:2px;background:#a0a0a0"></div>
<div class="a" style="left:472.7px;top:764px;width:1.3px;height:8px;background:#a6a6a6"></div>
<div class="a" style="left:486.0px;top:767px;width:2px;height:2px;background:#a0a0a0"></div>
<div class="a" style="left:513.5px;top:767px;width:2px;height:2px;background:#a0a0a0"></div>
<div class="a" style="left:527.6px;top:764px;width:1.3px;height:8px;background:#a6a6a6"></div>
<div class="a" style="left:540.9px;top:767px;width:2px;height:2px;background:#a0a0a0"></div>
<div class="a" style="left:568.4px;top:767px;width:2px;height:2px;background:#a0a0a0"></div>
<div class="a" style="left:582.5px;top:764px;width:1.3px;height:8px;background:#a6a6a6"></div>
<div class="a" style="left:595.9px;top:767px;width:2px;height:2px;background:#a0a0a0"></div>
<div class="a" style="left:623.3px;top:767px;width:2px;height:2px;background:#a0a0a0"></div>
<div class="a" style="left:637.5px;top:764px;width:1.3px;height:8px;background:#a6a6a6"></div>
<div class="a" style="left:650.8px;top:767px;width:2px;height:2px;background:#a0a0a0"></div>
<div class="a" style="left:678.3px;top:767px;width:2px;height:2px;background:#a0a0a0"></div>
<div class="a" style="left:692.4px;top:764px;width:1.3px;height:8px;background:#a6a6a6"></div>
<div class="a" style="left:705.7px;top:767px;width:2px;height:2px;background:#a0a0a0"></div>
<div class="a" style="left:733.2px;top:767px;width:2px;height:2px;background:#a0a0a0"></div>
<div class="a" style="left:747.3px;top:764px;width:1.3px;height:8px;background:#a6a6a6"></div>
<div class="a" style="left:760.7px;top:767px;width:2px;height:2px;background:#a0a0a0"></div>
<div class="a" style="left:788.1px;top:767px;width:2px;height:2px;background:#a0a0a0"></div>
<div class="a" style="left:802.3px;top:764px;width:1.3px;height:8px;background:#a6a6a6"></div>
<div class="a" style="left:815.6px;top:767px;width:2px;height:2px;background:#a0a0a0"></div>
<div class="a" style="left:843.1px;top:767px;width:2px;height:2px;background:#a0a0a0"></div>
<div class="a" style="left:857.2px;top:764px;width:1.3px;height:8px;background:#a6a6a6"></div>
<div class="a" style="left:870.5px;top:767px;width:2px;height:2px;background:#a0a0a0"></div>
<div class="a" style="left:898.0px;top:767px;width:2px;height:2px;background:#a0a0a0"></div>
<div class="a" style="left:912.1px;top:764px;width:1.3px;height:8px;background:#a6a6a6"></div>
<div class="a" style="left:925.4px;top:767px;width:2px;height:2px;background:#a0a0a0"></div>
<div class="a" style="left:952.9px;top:767px;width:2px;height:2px;background:#a0a0a0"></div>
<div class="a" style="left:967.0px;top:764px;width:1.3px;height:8px;background:#a6a6a6"></div>
<div class="a" style="left:980.4px;top:767px;width:2px;height:2px;background:#a0a0a0"></div>
<div class="a" style="left:1007.8px;top:767px;width:2px;height:2px;background:#a0a0a0"></div>
<svg class="a" style="left:124px;top:764px" width="16" height="20" viewBox="0 0 16 20"><path d="M1 7 L7 1 L13 7 V12 H1Z" fill="#e4e5e8" stroke="#9a9ca3" stroke-width="1"/></svg>
<svg class="a" style="left:56px;top:755px" width="16" height="10" viewBox="0 0 16 10"><path d="M1 1 H13 L7 8Z" fill="#e4e5e8" stroke="#a4a6ac" stroke-width="1"/></svg>
<svg class="a" style="left:1010px;top:764px" width="14" height="14" viewBox="0 0 14 14"><path d="M1 12 L6 6 L11 12Z" fill="#e4e5e8" stroke="#9a9ca3" stroke-width="1"/></svg>
<div class="a" style="left:133.3px;transform-origin:left;top:781.7px;font-size:19.2px;color:#333;font-weight:normal;font-family:'Liberation Sans', sans-serif;font-style:normal;letter-spacing:0.480px;transform:scaleX(1.0545);-webkit-text-stroke:0.2px #333;"><span id="t50">1.Are you going to have a rest tonight? You look tired. You (read)</span></div>
<div class="a" style="left:752.0px;transform-origin:left;top:781.7px;font-size:19.2px;color:#333;font-weight:normal;font-family:'Liberation Sans', sans-serif;font-style:normal;transform:scaleX(1.1121);-webkit-text-stroke:0.2px #333;"><span id="t51">............................</span></div>
<div class="a" style="left:926.0px;transform-origin:left;top:781.7px;font-size:19.2px;color:#333;font-weight:normal;font-family:'Liberation Sans', sans-serif;font-style:normal;letter-spacing:0.290px;transform:scaleX(1.0289);-webkit-text-stroke:0.2px #333;"><span id="t52">so much.</span></div>
<div class="a" style="left:133.3px;transform-origin:left;top:820.7px;font-size:19.2px;color:#333;font-weight:normal;font-family:'Liberation Sans', sans-serif;font-style:normal;letter-spacing:0.582px;transform:scaleX(1.0668);-webkit-text-stroke:0.2px #333;"><span id="t53">2.(you/ play)</span></div>
<div class="a" style="left:261.0px;transform-origin:left;top:820.7px;font-size:19.2px;color:#333;font-weight:normal;font-family:'Liberation Sans', sans-serif;font-style:normal;transform:scaleX(1.1567);-webkit-text-stroke:0.2px #333;"><span id="t54">........................</span></div>
<div class="a" style="left:416.0px;transform-origin:left;top:820.7px;font-size:19.2px;color:#333;font-weight:normal;font-family:'Liberation Sans', sans-serif;font-style:normal;letter-spacing:0.525px;transform:scaleX(1.0613);-webkit-text-stroke:0.2px #333;"><span id="t55">that game yet? - No, I haven’t. I’m going to do it tonight</span></div>
<div class="a" style="left:133.3px;transform-origin:left;top:905.7px;font-size:19.2px;color:#333;font-weight:normal;font-family:'Liberation Sans', sans-serif;font-style:normal;letter-spacing:0.522px;transform:scaleX(1.0616);-webkit-text-stroke:0.2px #333;"><span id="t56">3.Jane (not/ talk)</span></div>
<div class="a" style="left:303.0px;transform-origin:left;top:905.7px;font-size:19.2px;color:#333;font-weight:normal;font-family:'Liberation Sans', sans-serif;font-style:normal;transform:scaleX(1.1466);-webkit-text-stroke:0.2px #333;"><span id="t57">...............................</span></div>
<div class="a" style="left:505.0px;transform-origin:left;top:905.7px;font-size:19.2px;color:#333;font-weight:normal;font-family:'Liberation Sans', sans-serif;font-style:normal;letter-spacing:0.480px;transform:scaleX(1.0525);-webkit-text-stroke:0.2px #333;"><span id="t58">to me this week.</span></div>
<div class="a" style="left:133.3px;transform-origin:left;top:943.7px;font-size:19.2px;color:#333;font-weight:normal;font-family:'Liberation Sans', sans-serif;font-style:normal;letter-spacing:0.481px;transform:scaleX(1.0529);-webkit-text-stroke:0.2px #333;"><span id="t59">4.Would you like some more coffee? - No, thanks. I (already/ have)</span></div>
<div class="a" style="left:772.0px;transform-origin:left;top:943.7px;font-size:19.2px;color:#333;font-weight:normal;font-family:'Liberation Sans', sans-serif;font-style:normal;transform:scaleX(1.1254);-webkit-text-stroke:0.2px #333;"><span id="t60">...............</span></div>
<div class="a" style="left:868.0px;transform-origin:left;top:943.7px;font-size:19.2px;color:#333;font-weight:normal;font-family:'Liberation Sans', sans-serif;font-style:normal;letter-spacing:0.526px;transform:scaleX(1.0574);-webkit-text-stroke:0.2px #333;"><span id="t61">three cups.</span></div>
<div class="a" style="left:133.3px;transform-origin:left;top:981.7px;font-size:19.2px;color:#333;font-weight:normal;font-family:'Liberation Sans', sans-serif;font-style:normal;letter-spacing:0.433px;transform:scaleX(1.0483);-webkit-text-stroke:0.2px #333;"><span id="t62">5.The room looks so clean! - Thanks, I (just/ vacuum)</span></div>
<div class="a" style="left:636.0px;transform-origin:left;top:981.7px;font-size:19.2px;color:#333;font-weight:normal;font-family:'Liberation Sans', sans-serif;font-style:normal;transform:scaleX(1.1489);-webkit-text-stroke:0.2px #333;"><span id="t63">................................</span></div>
<div class="a" style="left:839.5px;transform-origin:left;top:981.7px;font-size:19.2px;color:#333;font-weight:normal;font-family:'Liberation Sans', sans-serif;font-style:normal;letter-spacing:0.469px;transform:scaleX(1.0554);-webkit-text-stroke:0.2px #333;"><span id="t64">in here.</span></div>
<div class="a" style="left:133.3px;transform-origin:left;top:1019.7px;font-size:19.2px;color:#333;font-weight:normal;font-family:'Liberation Sans', sans-serif;font-style:normal;letter-spacing:0.523px;transform:scaleX(1.0538);-webkit-text-stroke:0.2px #333;"><span id="t65">6.How many times (you/ see)</span></div>
<div class="a" style="left:414.0px;transform-origin:left;top:1019.7px;font-size:19.2px;color:#333;font-weight:normal;font-family:'Liberation Sans', sans-serif;font-style:normal;transform:scaleX(1.1607);-webkit-text-stroke:0.2px #333;"><span id="t66">................................</span></div>
<div class="a" style="left:622.0px;transform-origin:left;top:1019.7px;font-size:19.2px;color:#333;font-weight:normal;font-family:'Liberation Sans', sans-serif;font-style:normal;letter-spacing:0.507px;transform:scaleX(1.0513);-webkit-text-stroke:0.2px #333;"><span id="t67">him today?</span></div>
<div class="a" style="left:133.3px;transform-origin:left;top:1058.7px;font-size:19.2px;color:#333;font-weight:normal;font-family:'Liberation Sans', sans-serif;font-style:normal;letter-spacing:0.427px;transform:scaleX(1.0471);-webkit-text-stroke:0.2px #333;"><span id="t68">7.His joke (not come)</span></div>
<div class="a" style="left:335.0px;transform-origin:left;top:1058.7px;font-size:19.2px;color:#333;font-weight:normal;font-family:'Liberation Sans', sans-serif;font-style:normal;transform:scaleX(1.1645);-webkit-text-stroke:0.2px #333;"><span id="t69">........................</span></div>
<div class="a" style="left:492.5px;transform-origin:left;top:1058.7px;font-size:19.2px;color:#333;font-weight:normal;font-family:'Liberation Sans', sans-serif;font-style:normal;letter-spacing:0.552px;transform:scaleX(1.0594);-webkit-text-stroke:0.2px #333;"><span id="t70">offyesterday. Nobody (laugh)</span></div>
<div class="a" style="left:771.0px;transform-origin:left;top:1058.7px;font-size:19.2px;color:#333;font-weight:normal;font-family:'Liberation Sans', sans-serif;font-style:normal;transform:scaleX(1.1547);-webkit-text-stroke:0.2px #333;"><span id="t71">.......................</span></div>
<div class="a" style="left:133.3px;transform-origin:left;top:1096.7px;font-size:19.2px;color:#333;font-weight:normal;font-family:'Liberation Sans', sans-serif;font-style:normal;letter-spacing:0.489px;transform:scaleX(1.0589);-webkit-text-stroke:0.2px #333;"><span id="t72">8.I (buy)</span></div>
<div class="a" style="left:216.0px;transform-origin:left;top:1096.7px;font-size:19.2px;color:#333;font-weight:normal;font-family:'Liberation Sans', sans-serif;font-style:normal;transform:scaleX(1.1825);-webkit-text-stroke:0.2px #333;"><span id="t73">.......................</span></div>
<div class="a" style="left:369.0px;transform-origin:left;top:1096.7px;font-size:19.2px;color:#333;font-weight:normal;font-family:'Liberation Sans', sans-serif;font-style:normal;letter-spacing:0.366px;transform:scaleX(1.0457);-webkit-text-stroke:0.2px #333;"><span id="t74">this car last week. It (cost)</span></div>
<div class="a" style="left:618.5px;transform-origin:left;top:1096.7px;font-size:19.2px;color:#333;font-weight:normal;font-family:'Liberation Sans', sans-serif;font-style:normal;transform:scaleX(1.1918);-webkit-text-stroke:0.2px #333;"><span id="t75">........................</span></div>
<div class="a" style="left:778.5px;transform-origin:left;top:1096.7px;font-size:19.2px;color:#333;font-weight:normal;font-family:'Liberation Sans', sans-serif;font-style:normal;letter-spacing:0.405px;transform:scaleX(1.0440);-webkit-text-stroke:0.2px #333;"><span id="t76">an arm and a leg!</span></div>
<div class="a" style="left:133.3px;transform-origin:left;top:1134.7px;font-size:19.2px;color:#333;font-weight:normal;font-family:'Liberation Sans', sans-serif;font-style:normal;letter-spacing:0.551px;transform:scaleX(1.0640);-webkit-text-stroke:0.2px #333;"><span id="t77">9.I (not/ dance)</span></div>
<div class="a" style="left:284.0px;transform-origin:left;top:1134.7px;font-size:19.2px;color:#333;font-weight:normal;font-family:'Liberation Sans', sans-serif;font-style:normal;transform:scaleX(1.1880);-webkit-text-stroke:0.2px #333;"><span id="t78">..............................</span></div>
<div class="a" style="left:482.5px;transform-origin:left;top:1134.7px;font-size:19.2px;color:#333;font-weight:normal;font-family:'Liberation Sans', sans-serif;font-style:normal;letter-spacing:0.565px;transform:scaleX(1.0599);-webkit-text-stroke:0.2px #333;"><span id="t79">since my childhood.</span></div>
<div class="a" style="left:133.3px;transform-origin:left;top:1173.3px;font-size:19.2px;color:#333;font-weight:normal;font-family:'Liberation Sans', sans-serif;font-style:normal;letter-spacing:0.495px;transform:scaleX(1.0492);-webkit-text-stroke:0.2px #333;"><span id="t80">10.We (have)</span></div>
<div class="a" style="left:264.0px;transform-origin:left;top:1173.3px;font-size:19.2px;color:#333;font-weight:normal;font-family:'Liberation Sans', sans-serif;font-style:normal;transform:scaleX(1.1624);-webkit-text-stroke:0.2px #333;"><span id="t81">............................</span></div>
<div class="a" style="left:445.0px;transform-origin:left;top:1173.3px;font-size:19.2px;color:#333;font-weight:normal;font-family:'Liberation Sans', sans-serif;font-style:normal;letter-spacing:0.532px;transform:scaleX(1.0596);-webkit-text-stroke:0.2px #333;"><span id="t82">a lot of fun last summer. We (go)</span></div>
<div class="a" style="left:761.0px;transform-origin:left;top:1173.3px;font-size:19.2px;color:#333;font-weight:normal;font-family:'Liberation Sans', sans-serif;font-style:normal;transform:scaleX(1.1937);-webkit-text-stroke:0.2px #333;"><span id="t83">......................</span></div>
<div class="a" style="left:909.5px;transform-origin:left;top:1173.3px;font-size:19.2px;color:#333;font-weight:normal;font-family:'Liberation Sans', sans-serif;font-style:normal;letter-spacing:0.451px;transform:scaleX(1.0514);-webkit-text-stroke:0.2px #333;"><span id="t84">to Croatia</span></div>
<div class="a" style="left:133.3px;transform-origin:left;top:1205.7px;font-size:19.2px;color:#333;font-weight:normal;font-family:'Liberation Sans', sans-serif;font-style:normal;letter-spacing:0.489px;transform:scaleX(1.0563);-webkit-text-stroke:0.2px #333;"><span id="t85">by car and took a lot of photos.</span></div>
<div class="a" style="left:64.6px;transform-origin:left;top:1244.2px;font-size:22px;color:#35abe0;font-weight:bold;font-family:'Liberation Sans', sans-serif;font-style:normal;transform:scaleX(1.0732);"><span id="t86">Exercise 4: Complete the text with available words.</span></div>
<div class="a" style="left:139px;top:1283px;width:808px;height:88px;background:#fff"></div>
<div class="a" style="left:139.0px;top:1283.4px;width:160.3px;height:42.1px;background:#dbd7c7"></div>
<div class="a" style="left:139.0px;top:1327.5px;width:160.3px;height:43.5px;background:#dbd7c7"></div>
<div class="a" style="left:-280.2px;width:1000px;text-align:center;transform-origin:center;top:1294.1px;font-size:19.2px;color:#333;font-weight:normal;font-family:'Liberation Sans', sans-serif;font-style:normal;-webkit-text-stroke:0.2px #333;"><span id="t87">since</span></div>
<div class="a" style="left:-280.2px;width:1000px;text-align:center;transform-origin:center;top:1338.7px;font-size:19.2px;color:#333;font-weight:normal;font-family:'Liberation Sans', sans-serif;font-style:normal;-webkit-text-stroke:0.2px #333;"><span id="t88">for</span></div>
<div class="a" style="left:301.7px;top:1283.4px;width:159.1px;height:42.1px;background:#dbd7c7"></div>
<div class="a" style="left:301.7px;top:1327.5px;width:159.1px;height:43.5px;background:#dbd7c7"></div>
<div class="a" style="left:-118.8px;width:1000px;text-align:center;transform-origin:center;top:1294.1px;font-size:19.2px;color:#333;font-weight:normal;font-family:'Liberation Sans', sans-serif;font-style:normal;-webkit-text-stroke:0.2px #333;"><span id="t89">yet</span></div>
<div class="a" style="left:-118.8px;width:1000px;text-align:center;transform-origin:center;top:1338.7px;font-size:19.2px;color:#333;font-weight:normal;font-family:'Liberation Sans', sans-serif;font-style:normal;-webkit-text-stroke:0.2px #333;"><span id="t90">have</span></div>
<div class="a" style="left:463.2px;top:1283.4px;width:159.1px;height:42.1px;background:#dbd7c7"></div>
<div class="a" style="left:463.2px;top:1327.5px;width:159.1px;height:43.5px;background:#dbd7c7"></div>
<div class="a" style="left:42.8px;width:1000px;text-align:center;transform-origin:center;top:1294.1px;font-size:19.2px;color:#333;font-weight:normal;font-family:'Liberation Sans', sans-serif;font-style:normal;-webkit-text-stroke:0.2px #333;"><span id="t91">had</span></div>
<div class="a" style="left:42.8px;width:1000px;text-align:center;transform-origin:center;top:1338.7px;font-size:19.2px;color:#333;font-weight:normal;font-family:'Liberation Sans', sans-serif;font-style:normal;-webkit-text-stroke:0.2px #333;"><span id="t92">already</span></div>
<div class="a" style="left:624.7px;top:1283.4px;width:159.1px;height:42.1px;background:#dbd7c7"></div>
<div class="a" style="left:624.7px;top:1327.5px;width:159.1px;height:43.5px;background:#dbd7c7"></div>
<div class="a" style="left:204.2px;width:1000px;text-align:center;transform-origin:center;top:1294.1px;font-size:19.2px;color:#333;font-weight:normal;font-family:'Liberation Sans', sans-serif;font-style:normal;-webkit-text-stroke:0.2px #333;"><span id="t93">already</span></div>
<div class="a" style="left:204.2px;width:1000px;text-align:center;transform-origin:center;top:1338.7px;font-size:19.2px;color:#333;font-weight:normal;font-family:'Liberation Sans', sans-serif;font-style:normal;-webkit-text-stroke:0.2px #333;"><span id="t94">never</span></div>
<div class="a" style="left:786.2px;top:1283.4px;width:159.1px;height:42.1px;background:#dbd7c7"></div>
<div class="a" style="left:786.2px;top:1327.5px;width:159.1px;height:43.5px;background:#dbd7c7"></div>
<div class="a" style="left:365.8px;width:1000px;text-align:center;transform-origin:center;top:1294.1px;font-size:19.2px;color:#333;font-weight:normal;font-family:'Liberation Sans', sans-serif;font-style:normal;-webkit-text-stroke:0.2px #333;"><span id="t95">ago</span></div>
<div class="a" style="left:365.8px;width:1000px;text-align:center;transform-origin:center;top:1338.7px;font-size:19.2px;color:#333;font-weight:normal;font-family:'Liberation Sans', sans-serif;font-style:normal;-webkit-text-stroke:0.2px #333;"><span id="t96">ever</span></div>
<div class="a" style="left:134.2px;transform-origin:left;top:1388.2px;font-size:19px;color:#333;font-weight:normal;font-family:'Liberation Sans', sans-serif;font-style:normal;letter-spacing:0.302px;transform:scaleX(1.0428);-webkit-text-stroke:0.2px #333;"><span id="t97">I (1)</span></div>
<div class="a" style="left:179.0px;transform-origin:left;top:1388.2px;font-size:19px;color:#333;font-weight:normal;font-family:'Liberation Sans', sans-serif;font-style:normal;transform:scaleX(1.0986);-webkit-text-stroke:0.2px #333;"><span id="t98">.........................</span></div>
<div class="a" style="left:332.5px;transform-origin:left;top:1388.2px;font-size:19px;color:#333;font-weight:normal;font-family:'Liberation Sans', sans-serif;font-style:normal;letter-spacing:0.799px;transform:scaleX(1.0882);-webkit-text-stroke:0.2px #333;"><span id="t99">always been very fit and healthy, and I have (2)</span></div>
<div class="a" style="left:815.0px;transform-origin:left;top:1388.2px;font-size:19px;color:#333;font-weight:normal;font-family:'Liberation Sans', sans-serif;font-style:normal;transform:scaleX(1.0835);-webkit-text-stroke:0.2px #333;"><span id="t100">.........................</span></div>
<div class="a" style="left:967.0px;transform-origin:left;top:1388.2px;font-size:19px;color:#333;font-weight:normal;font-family:'Liberation Sans', sans-serif;font-style:normal;letter-spacing:0.595px;transform:scaleX(1.0589);-webkit-text-stroke:0.2px #333;"><span id="t101">had a</span></div>
<div class="a" style="left:99.0px;transform-origin:left;top:1418.9px;font-size:19px;color:#333;font-weight:normal;font-family:'Liberation Sans', sans-serif;font-style:normal;letter-spacing:0.564px;transform:scaleX(1.0629);-webkit-text-stroke:0.2px #333;"><span id="t102">serious illness. However, a couple of weeks (3)</span></div>
<div class="a" style="left:550.0px;transform-origin:left;top:1418.9px;font-size:19px;color:#333;font-weight:normal;font-family:'Liberation Sans', sans-serif;font-style:normal;transform:scaleX(1.0638);-webkit-text-stroke:0.2px #333;"><span id="t103">.........................,</span></div>
<div class="a" style="left:704.5px;transform-origin:left;top:1418.9px;font-size:19px;color:#333;font-weight:normal;font-family:'Liberation Sans', sans-serif;font-style:normal;letter-spacing:0.671px;transform:scaleX(1.0778);-webkit-text-stroke:0.2px #333;"><span id="t104">I caughtthe flu. I must admit that</span></div>
<div class="a" style="left:99.0px;transform-origin:left;top:1449.7px;font-size:19px;color:#333;font-weight:normal;font-family:'Liberation Sans', sans-serif;font-style:normal;letter-spacing:0.884px;transform:scaleX(1.1002);-webkit-text-stroke:0.2px #333;"><span id="t105">until then, I had not realized just how unpleasantthe flu could be. I (4)</span></div>
<div class="a" style="left:810.0px;transform-origin:left;top:1449.7px;font-size:19px;color:#333;font-weight:normal;font-family:'Liberation Sans', sans-serif;font-style:normal;transform:scaleX(1.0759);-webkit-text-stroke:0.2px #333;"><span id="t106">.........................</span></div>
<div class="a" style="left:964.5px;transform-origin:left;top:1449.7px;font-size:19px;color:#333;font-weight:normal;font-family:'Liberation Sans', sans-serif;font-style:normal;letter-spacing:0.352px;transform:scaleX(1.0391);-webkit-text-stroke:0.2px #333;"><span id="t107">a high</span></div>
<div class="a" style="left:99.0px;transform-origin:left;top:1481.4px;font-size:19px;color:#333;font-weight:normal;font-family:'Liberation Sans', sans-serif;font-style:normal;letter-spacing:0.765px;transform:scaleX(1.0838);-webkit-text-stroke:0.2px #333;"><span id="t108">temperature for nearly a week,and my whole body hurt. I don’t think I have (5)</span></div>
<div class="a" style="left:878.5px;transform-origin:left;top:1481.4px;font-size:19px;color:#333;font-weight:normal;font-family:'Liberation Sans', sans-serif;font-style:normal;transform:scaleX(1.0759);-webkit-text-stroke:0.2px #333;"><span id="t109">.........................</span></div>
</div>
</body></html>
